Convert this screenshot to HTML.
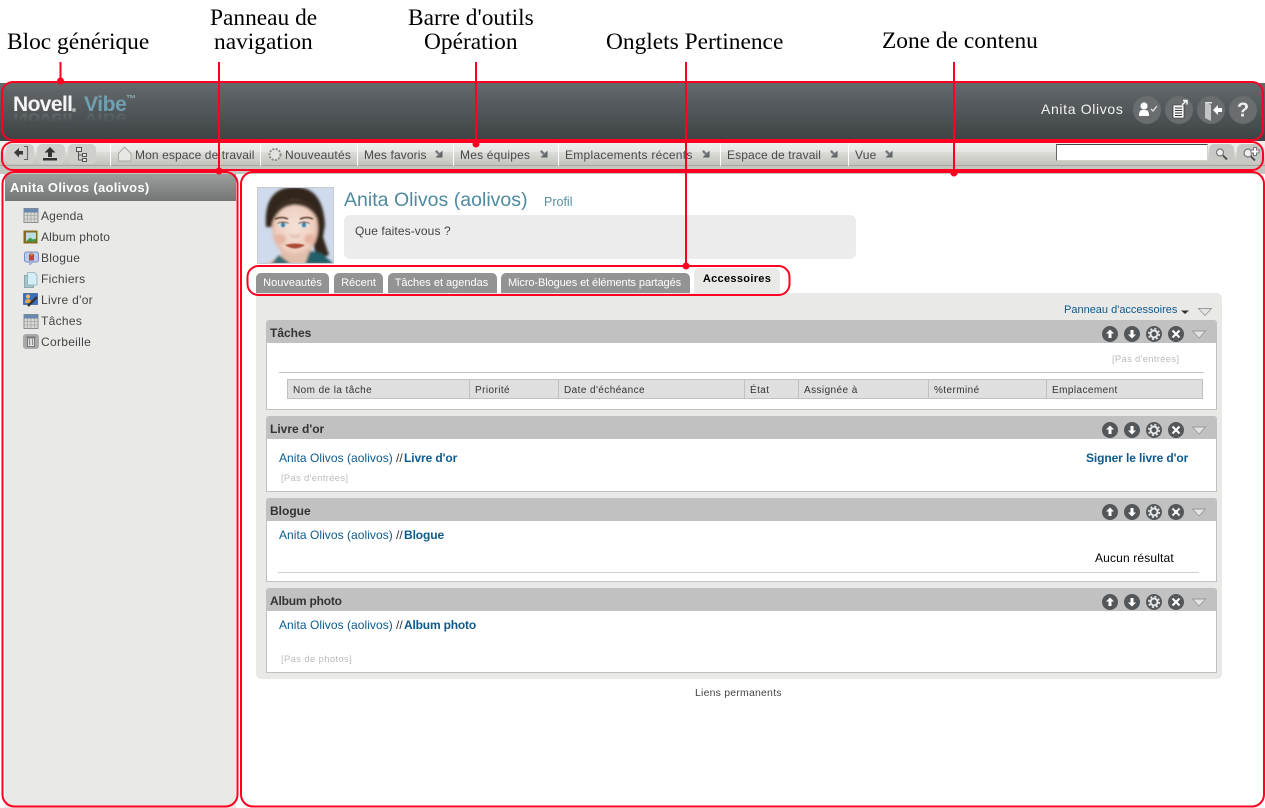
<!DOCTYPE html>
<html lang="fr"><head><meta charset="utf-8"><title>Novell Vibe</title>
<style>
html,body{margin:0;padding:0;background:#fff}
#p{position:relative;width:1265px;height:808px;overflow:hidden;background:#fff;font-family:"Liberation Sans",Arial,sans-serif}
.b{position:absolute}
.t{position:absolute;white-space:nowrap;line-height:16px;height:16px;font-size:11px;color:#444}
.a{font-family:"Liberation Serif",serif;font-size:23.4px;color:#000;line-height:28px;height:28px}
.tb{font-size:12px;color:#484a4a;letter-spacing:.2px}
.nv{font-size:12px;color:#444;letter-spacing:.3px}
.tab{position:absolute;top:273px;height:20px;background:#939393;border-radius:5px 5px 0 0;color:#fff;font-size:11px;line-height:21px;text-align:center;white-space:nowrap}
.gh{position:absolute;left:266px;width:951px;height:23px;background:#c1c1c1;border-radius:3px 3px 0 0}
.gb{position:absolute;left:266px;width:949px;background:#fff;border:1px solid #c1c1c1;border-top:0}
.gt{font-size:12px;font-weight:bold;color:#333}
.lk{font-size:12px;color:#0f5a8c;letter-spacing:.05px}
.lb{font-size:12px;color:#0f5a8c;font-weight:bold;letter-spacing:-.1px}
.ep{font-size:9.5px;color:#bbb;letter-spacing:.28px}
.th{font-size:10px;color:#333;letter-spacing:.42px}
.sep{position:absolute;top:143px;width:1px;height:23px;background:#fff}
.btn{position:absolute;top:144px;height:20px;background:#cfd0cc;border-radius:5px}
svg{position:absolute;display:block;overflow:visible}
</style></head><body><div id="p">

<!-- header -->
<div class="b" style="left:0;top:83px;width:1265px;height:58px;background:linear-gradient(#64696c,#3e4245)"></div>
<div class="t" style="left:13px;top:94px;height:22px;line-height:22px;font-size:21px;font-weight:bold;color:#f4f4f4;letter-spacing:-.6px">Novell</div>
<div class="t" style="left:84px;top:94px;height:22px;line-height:22px;font-size:21px;font-weight:bold;color:#6f9fb1;letter-spacing:-.4px">Vibe</div>
<div class="t" style="left:126px;top:95px;height:9px;line-height:9px;font-size:10px;font-weight:bold;color:#8fa9b3">™</div>
<div class="b" style="left:72px;top:108px;width:4px;height:4px;border-radius:50%;background:#aaa"></div>
<div class="t" style="left:13px;top:107px;height:22px;line-height:22px;font-size:21px;font-weight:bold;color:#888;letter-spacing:-.6px;transform:scaleY(-.75);opacity:.55;-webkit-mask-image:linear-gradient(to top,#000,transparent 80%)">Novell</div>
<div class="t" style="left:84px;top:107px;height:22px;line-height:22px;font-size:21px;font-weight:bold;color:#6f8f9b;letter-spacing:-.4px;transform:scaleY(-.75);opacity:.45;-webkit-mask-image:linear-gradient(to top,#000,transparent 80%)">Vibe</div>
<div class="t" style="left:1041px;top:101px;font-size:14px;color:#f2f2f2;letter-spacing:.65px">Anita Olivos</div>
<svg style="left:0;top:0" width="1265" height="140">
<g fill="#696d6f"><circle cx="1147" cy="110" r="14"/><circle cx="1179" cy="110" r="14"/><circle cx="1211" cy="110" r="14"/><circle cx="1243" cy="110" r="14"/></g>
<g fill="#fff"><circle cx="1144" cy="106" r="3.6"/><path d="M1139 116q0-6 3-6h4q3 0 3 6z"/></g>
<path d="M1151 109l2 2 4-5" fill="none" stroke="#ddd" stroke-width="1.4"/>
<path d="M1173 105h11v13h-11z" fill="#f4f4f4" stroke="#222" stroke-width=".6"/>
<path d="M1175 108h7M1175 110.500h7M1175 113h7M1175 115.500h7" stroke="#333" stroke-width="1"/>
<path d="M1182 105l4-4M1183 100.500h4v4" fill="none" stroke="#fff" stroke-width="1.400"/>
<path d="M1205 102l6 3v16l-6-3z" fill="#c2c4c5"/><path d="M1205 102h7v1.500h-5z" fill="#e4e4e4"/>
<path d="M1213 110l5-5v3h4v4h-4v3z" fill="#fff"/>
<text x="1243" y="116.500" text-anchor="middle" font-family="Liberation Sans" font-size="20" font-weight="bold" fill="#eee">?</text>
</svg>

<!-- toolbar -->
<div class="b" style="left:0;top:141px;width:1265px;height:11px;background:linear-gradient(#f0f0ee,#e6e6e3)"></div>
<div class="b" style="left:0;top:152px;width:1265px;height:13px;background:linear-gradient(#dcdcd8,#c3c4be)"></div>
<div class="b" style="left:0;top:165px;width:1265px;height:1px;background:#a6a7a2"></div>
<div class="b" style="left:0;top:166px;width:1265px;height:8px;background:#c4c5c0"></div>
<div class="btn" style="left:6px;width:28px"></div>
<div class="btn" style="left:37px;width:28px"></div>
<div class="btn" style="left:68px;width:28px"></div>
<svg style="left:0;top:140px" width="300" height="30">
<path d="M14 12.500l5-4.500v3h4v3.500h-4v3z" fill="#3a3a3a"/><path d="M24 6.500h3.500v13h-3.500" fill="none" stroke="#666" stroke-width="1.100"/>
<path d="M50 7l5.500 5.500h-3.500v4.500h-4v-4.500h-3.500z" fill="#333"/><path d="M43 18h14v2.500h-14z" fill="#333"/>
<path d="M76.500 7.500h5v4h-5zM82.500 13.500h4v3h-4zM82.500 18.500h4v3h-4z" fill="#e4e4e0" stroke="#555"/>
<path d="M78.500 11.500v8.500h4M78.500 15h4" fill="none" stroke="#555"/>
<path d="M118.500 13.500l6-6.500 6.500 6.500v7.500h-12.500z" fill="#e6e6e2" stroke="#a9aaa6"/>
<circle cx="275" cy="14.500" r="5.500" fill="#e2e2de" stroke="#8c8d89" stroke-width="2" stroke-dasharray="2 1.300"/>
</svg>
<div class="sep" style="left:110px"></div><div class="sep" style="left:260px"></div><div class="sep" style="left:357px"></div><div class="sep" style="left:453px"></div><div class="sep" style="left:558px"></div><div class="sep" style="left:720px"></div><div class="sep" style="left:848px"></div>
<div class="t tb" style="left:135px;top:147px;letter-spacing:.1px">Mon espace de travail</div>
<div class="t tb" style="left:285px;top:147px">Nouveautés</div>
<div class="t tb" style="left:364px;top:147px;letter-spacing:.12px">Mes favoris</div>
<div class="t tb" style="left:460px;top:147px">Mes équipes</div>
<div class="t tb" style="left:565px;top:147px;letter-spacing:.28px">Emplacements récents</div>
<div class="t tb" style="left:727px;top:147px;letter-spacing:.12px">Espace de travail</div>
<div class="t tb" style="left:855px;top:147px">Vue</div>
<svg style="left:0;top:0" width="1265" height="170">
<defs><g id="ar"><path d="M7.500 7.500H.5L7.500 .5Z" fill="#5f6467"/><path d="M.8 .8L5 5" stroke="#777b7e" stroke-width="2.400"/></g></defs>
<use href="#ar" x="435" y="150"/><use href="#ar" x="540" y="150"/><use href="#ar" x="702" y="150"/><use href="#ar" x="830" y="150"/><use href="#ar" x="885" y="150"/>
</svg>
<div class="b" style="left:1056px;top:144px;width:152px;height:17px;box-sizing:border-box;background:#fff;border:1px solid #d4d2c6;border-top-color:#444;border-left-color:#666"></div>
<div class="btn" style="left:1209px;width:25px;height:20px;background:#c8c9c5"></div>
<div class="btn" style="left:1237px;width:26px;height:20px;background:#c8c9c5"></div>
<svg style="left:1205px;top:140px" width="60" height="30">
<circle cx="15" cy="12.500" r="3.500" fill="#eee" stroke="#777" stroke-width="1.200"/><path d="M18 15.500l4 4" stroke="#444" stroke-width="1.800"/>
<circle cx="43" cy="13" r="4" fill="#eee" stroke="#777" stroke-width="1.200"/><path d="M46 16.500l4 4" stroke="#444" stroke-width="1.800"/>
<path d="M50 7v9M45.500 11.500h9" stroke="#777" stroke-width="4"/><path d="M50 8v7M46.500 11.500h7" stroke="#fff" stroke-width="2"/>
</svg>

<!-- nav -->
<div class="b" style="left:5px;top:174px;width:231px;height:634px;background:#e9e9e8"></div>
<div class="b" style="left:5px;top:174px;width:231px;height:27px;background:linear-gradient(#9b9f9d,#727675)"></div>
<div class="t" style="left:10px;top:180px;font-size:13px;font-weight:bold;color:#fff;letter-spacing:.3px">Anita Olivos (aolivos)</div>
<div class="t nv" style="left:41px;top:208px;letter-spacing:.15px">Agenda</div>
<div class="t nv" style="left:41px;top:229px;letter-spacing:.15px">Album photo</div>
<div class="t nv" style="left:41px;top:250px">Blogue</div>
<div class="t nv" style="left:41px;top:271px">Fichiers</div>
<div class="t nv" style="left:41px;top:292px">Livre d'or</div>
<div class="t nv" style="left:41px;top:313px">Tâches</div>
<div class="t nv" style="left:41px;top:334px">Corbeille</div>
<svg style="left:0;top:0" width="60" height="360">
<defs><g id="cal"><rect x="0" y="0" width="14" height="14" fill="#d8d8d4" stroke="#8c8f90"/><rect x="0" y="0" width="14" height="4" fill="#6a87ad"/><path d="M0 7h14M0 10.500h14M3.500 4v10M7 4v10M10.500 4v10" stroke="#a7a7a3" stroke-width=".8"/></g></defs>
<use href="#cal" x="24" y="208.500"/>
<rect x="23.500" y="230.500" width="14" height="13" fill="#866a1e"/><rect x="26" y="232.500" width="10" height="9" fill="#bcdcee"/><path d="M26 241.500l4-4 3 2 3-1v3z" fill="#3d9a4d"/>
<rect x="24.500" y="252" width="14" height="10" rx="2" fill="#b8cdf0" stroke="#7a8fc0"/><path d="M29 262l1 3 3-3z" fill="#b8cdf0" stroke="#7a8fc0" stroke-width=".6"/><rect x="29" y="254" width="5" height="6.500" fill="#b04a3a"/><circle cx="31.500" cy="254" r="1.500" fill="#c89060"/>
<rect x="24.500" y="275.500" width="9" height="12" fill="#a9c4cc" stroke="#8aa"/><path d="M27.500 272.500h7l2.500 2.500v10h-9.500z" fill="#d5edf7" stroke="#8eb0bc" stroke-width=".8"/>
<rect x="23.500" y="293.500" width="14" height="11" fill="#3a70bb" stroke="#2a4a80" stroke-width=".6"/><circle cx="28" cy="296.500" r="2" fill="#f0c070"/><path d="M25 303q0-4 3-4t3 4z" fill="#e8a850"/><path d="M28 306l9-9" stroke="#333" stroke-width="2.400"/>
<use href="#cal" x="24" y="314.500"/>
<rect x="23" y="334" width="16" height="15" rx="3" fill="#a9a9a9"/><path d="M27.500 338h7v8.500h-7zM26.500 337h9" fill="#ddd" stroke="#666" stroke-width=".8"/><path d="M29.500 339v6M32.500 339v6" stroke="#777" stroke-width=".8"/>
</svg>

<!-- content: profile -->
<svg style="left:257px;top:187px" width="77" height="77" viewBox="0 0 77 77">
<defs><clipPath id="cp"><rect width="77" height="77"/></clipPath>
<filter id="bl" x="-15%" y="-15%" width="130%" height="130%"><feGaussianBlur stdDeviation="1.300"/></filter>
<filter id="bs" x="-40%" y="-40%" width="180%" height="180%"><feGaussianBlur stdDeviation=".6"/></filter>
<radialGradient id="sk" cx=".5" cy=".5" r=".62"><stop offset="0" stop-color="#f5e2d8"/><stop offset=".65" stop-color="#efcfc0"/><stop offset="1" stop-color="#cf9d84"/></radialGradient></defs>
<rect width="77" height="77" fill="#cfdaec"/>
<g clip-path="url(#cp)">
<g filter="url(#bl)">
<path d="M9 40Q6 0 38 0Q66 0 68 38L66 50L72 68L60 72L52 40H18Z" fill="#33271c"/>
<path d="M24 58L24 69L8 77H64L54 68L54 56Z" fill="#dfbfac"/>
<path d="M48 77L53 64L64 66L77 77Z" fill="#225f68"/><path d="M22 68L34 77H14Z" fill="#356a70"/>
<ellipse cx="38" cy="41" rx="23" ry="29" fill="url(#sk)"/>
<path d="M14 40Q15 13 38 12Q60 13 63 40Q58 19 38 18Q20 19 14 40Z" fill="#3c2e22"/>
<ellipse cx="23" cy="52" rx="6" ry="5" fill="#e6b5a4"/><ellipse cx="53" cy="52" rx="6" ry="5" fill="#e6b5a4"/>
<path d="M33 48q5 3 10 0" stroke="#d2a893" stroke-width="1.600" fill="none"/>
</g>
<g filter="url(#bs)">
<path d="M18 32q7-3 13 0M43 32q7-3 13 0" stroke="#5a3e2e" stroke-width="1.500" fill="none"/>
<ellipse cx="26" cy="38" rx="5" ry="2" fill="#dfe6ea"/><circle cx="26" cy="38" r="2.300" fill="#3e86a8"/>
<ellipse cx="47" cy="38" rx="5" ry="2" fill="#dfe6ea"/><circle cx="47" cy="38" r="2.300" fill="#3e86a8"/>
<path d="M20.500 36.500q5.500-2.500 11 0M41.500 36.500q5.500-2.500 11 0" stroke="#4a3428" stroke-width=".9" fill="none"/>
<path d="M28 58Q38 55 48 58Q38 65 28 58Z" fill="#ad4c38"/>
</g>
</g>
<rect x=".5" y=".5" width="76" height="76" fill="none" stroke="#c8ccd0"/>
</svg>
<div class="t" style="left:344px;top:188px;height:24px;line-height:24px;font-size:19.5px;color:#4f8a9f;letter-spacing:.02px">Anita Olivos (aolivos)</div>
<div class="t" style="left:544px;top:194px;font-size:12.5px;color:#5b8fa3">Profil</div>
<div class="b" style="left:344px;top:215px;width:512px;height:44px;background:#ececec;border-radius:6px"></div>
<div class="t" style="left:355px;top:223px;font-size:12px;letter-spacing:.1px">Que faites-vous ?</div>

<!-- tabs -->
<div class="tab" style="left:256px;width:73px">Nouveautés</div>
<div class="tab" style="left:334px;width:49px">Récent</div>
<div class="tab" style="left:388px;width:107px;padding-right:2px">Tâches et agendas</div>
<div class="tab" style="left:501px;width:187px;padding-right:2px;letter-spacing:-.09px">Micro-Blogues et éléments partagés</div>
<div class="tab" style="left:694px;top:268px;width:86px;height:25px;background:#e9e9e8;color:#000;font-weight:bold;line-height:22px;letter-spacing:.32px">Accessoires</div>

<!-- panel -->
<div class="b" style="left:256px;top:293px;width:966px;height:386px;background:#e9e9e8;border-radius:0 5px 5px 5px"></div>
<div class="t lk" style="left:1064px;top:302px;font-size:11px;letter-spacing:0">Panneau d'accessoires</div>

<div class="gh" style="top:320px"></div><div class="gb" style="top:343px;height:66px"></div>
<div class="gh" style="top:416px"></div><div class="gb" style="top:439px;height:52px"></div>
<div class="gh" style="top:498px"></div><div class="gb" style="top:521px;height:60px"></div>
<div class="gh" style="top:588px"></div><div class="gb" style="top:611px;height:61px"></div>

<svg style="left:0;top:0" width="1265" height="700">
<defs>
<g id="tri"><path d="M.5 .5h13l-6.500 7z" fill="#e4e4e4" stroke="#999" stroke-width=".9"/></g>
<g id="ctl">
<circle cx="1110" cy="14" r="8" fill="#54575a"/><path d="M1110 9.500l4 4h-2.500v4.500h-3v-4.500h-2.500z" fill="#fff"/>
<circle cx="1132" cy="14" r="8" fill="#54575a"/><path d="M1132 18.500l4-4h-2.500v-4.500h-3v4.500h-2.500z" fill="#fff"/>
<circle cx="1154" cy="14" r="8" fill="#54575a"/><circle cx="1154" cy="14" r="3.500" fill="none" stroke="#e8e8e8" stroke-width="2"/><circle cx="1154" cy="14" r="5.300" fill="none" stroke="#e8e8e8" stroke-width="1.600" stroke-dasharray="2 2.200"/>
<circle cx="1176" cy="14" r="8" fill="#54575a"/><path d="M1172.500 10.500l7 7M1179.500 10.500l-7 7" stroke="#fff" stroke-width="2"/>
<use href="#tri" x="1192" y="10.500"/>
</g></defs>
<use href="#ctl" y="320"/><use href="#ctl" y="416"/><use href="#ctl" y="498"/><use href="#ctl" y="588"/>
<use href="#tri" x="1198" y="308"/>
<path d="M1181 310.500h8l-4 3.500z" fill="#333"/>
</svg>

<div class="t gt" style="left:270px;top:325px">Tâches</div>
<div class="t gt" style="left:270px;top:421px">Livre d'or</div>
<div class="t gt" style="left:270px;top:503px">Blogue</div>
<div class="t gt" style="left:270px;top:593px;letter-spacing:-.2px">Album photo</div>

<div class="t ep" style="left:1112px;top:352px">[Pas d'entrées]</div>
<div class="b" style="left:279px;top:372px;width:925px;height:1px;background:#c4c4c4"></div>
<div class="b" style="left:287px;top:379px;width:916px;height:20px;box-sizing:border-box;background:#dfdfdf;border:1px solid #c1c1c1"></div>
<div class="b" style="left:469px;top:379px;width:1px;height:20px;background:#c1c1c1"></div>
<div class="b" style="left:558px;top:379px;width:1px;height:20px;background:#c1c1c1"></div>
<div class="b" style="left:744px;top:379px;width:1px;height:20px;background:#c1c1c1"></div>
<div class="b" style="left:798px;top:379px;width:1px;height:20px;background:#c1c1c1"></div>
<div class="b" style="left:928px;top:379px;width:1px;height:20px;background:#c1c1c1"></div>
<div class="b" style="left:1046px;top:379px;width:1px;height:20px;background:#c1c1c1"></div>
<div class="t th" style="left:293px;top:383px">Nom de la tâche</div>
<div class="t th" style="left:475px;top:383px">Priorité</div>
<div class="t th" style="left:564px;top:383px">Date d'échéance</div>
<div class="t th" style="left:750px;top:383px">État</div>
<div class="t th" style="left:804px;top:383px">Assignée à</div>
<div class="t th" style="left:934px;top:383px">%terminé</div>
<div class="t th" style="left:1052px;top:383px">Emplacement</div>

<div class="t lk" style="left:279px;top:450px">Anita Olivos (aolivos)</div>
<div class="t" style="left:396px;top:450px;font-size:12px;color:#333">//</div>
<div class="t lb" style="left:404px;top:450px">Livre d'or</div>
<div class="t lb" style="left:1086px;top:450px">Signer le livre d'or</div>
<div class="t ep" style="left:281px;top:471px">[Pas d'entrées]</div>

<div class="t lk" style="left:279px;top:527px">Anita Olivos (aolivos)</div>
<div class="t" style="left:396px;top:527px;font-size:12px;color:#333">//</div>
<div class="t lb" style="left:404px;top:527px">Blogue</div>
<div class="t" style="left:1095px;top:550px;font-size:12px;color:#000;letter-spacing:.15px">Aucun résultat</div>
<div class="b" style="left:278px;top:572px;width:921px;height:1px;background:#cfcfcf"></div>

<div class="t lk" style="left:279px;top:617px">Anita Olivos (aolivos)</div>
<div class="t" style="left:396px;top:617px;font-size:12px;color:#333">//</div>
<div class="t lb" style="left:404px;top:617px;letter-spacing:-.18px">Album photo</div>
<div class="t ep" style="left:281px;top:652px;letter-spacing:.34px">[Pas de photos]</div>

<div class="t" style="left:695px;top:685px;font-size:10.500px;color:#444;letter-spacing:.2px">Liens permanents</div>

<!-- annotations -->
<div class="t a" style="left:7px;top:28px">Bloc générique</div>
<div class="t a" style="left:210px;top:4px">Panneau de</div>
<div class="t a" style="left:214px;top:28px">navigation</div>
<div class="t a" style="left:408px;top:4px">Barre d'outils</div>
<div class="t a" style="left:424px;top:28px">Opération</div>
<div class="t a" style="left:606px;top:28px">Onglets Pertinence</div>
<div class="t a" style="left:882px;top:27px">Zone de contenu</div>

<svg style="left:0;top:0" width="1265" height="808">
<g fill="none" stroke="#ff0022" stroke-width="2">
<rect x="2" y="82" width="1261" height="58" rx="11"/>
<rect x="2" y="142" width="1261" height="28" rx="11"/>
<rect x="2.500" y="172" width="235" height="634.500" rx="12"/>
<rect x="241" y="172" width="1023" height="634.500" rx="12"/>
<rect x="247.500" y="266" width="542" height="29" rx="11"/>
<path d="M60.500 62V81M219 62V172M476 62V143M686 62V266M954 62V172"/>
</g>
<g fill="#ff0022"><circle cx="60.500" cy="81" r="3.500"/><circle cx="219" cy="171" r="3.500"/><circle cx="476" cy="144" r="3.500"/><circle cx="686" cy="266" r="3.500"/><circle cx="954" cy="173" r="3.500"/></g>
</svg>
</div></body></html>
